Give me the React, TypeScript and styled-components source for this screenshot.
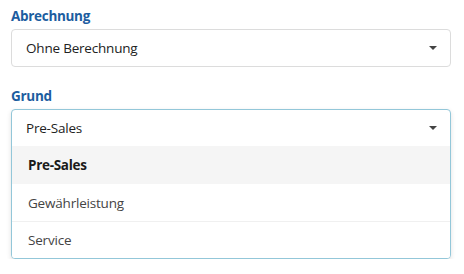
import React, { useState } from "react";
import styled, { createGlobalStyle } from "styled-components";

const GlobalStyle = createGlobalStyle`
    html, body {
        margin: 0;
        padding: 0;
        background: #ffffff;
    }
    body {
        font-family: "Open Sans", "Noto Sans", sans-serif;
        font-size: 13.5px;
        color: #333333;
    }
`

const Form = styled.div`
    width: 440px;
    padding: 7px 13px 0 11px;
    display: flex;
    flex-direction: column;
    gap: 20px;
`

const Field = styled.div`
    display: flex;
    flex-direction: column;
    gap: 3px;
`

const Label = styled.label`
    font-size: 13.5px;
    font-weight: 700;
    line-height: 19px;
    letter-spacing: -0.3px;
    color: #1c5d9f;
`

const SelectBox = styled.div<{ open?: boolean }>`
    border: 1px solid ${p => p.open ? "#93c7d9" : "#dcdcdc"};
    border-radius: 4px;
    background: #ffffff;
    box-shadow: ${p => p.open ? "0 2px 5px rgba(0, 0, 0, 0.12)" : "none"};
    overflow: hidden;
`

const SelectRow = styled.div`
    height: 36px;
    display: flex;
    align-items: center;
    justify-content: space-between;
    padding: 0 13px 0 14px;
    cursor: pointer;
`

const SelectValue = styled.span`
    font-size: 13.5px;
    letter-spacing: -0.2px;
    color: #222222;
`

const Caret = styled.span`
    width: 0;
    height: 0;
    border-left: 4px solid transparent;
    border-right: 4px solid transparent;
    border-top: 4px solid #444444;
`

const OptionList = styled.ul`
    list-style: none;
    margin: 0;
    padding: 0;
`

const Option = styled.li<{ selected?: boolean }>`
    height: 37px;
    display: flex;
    align-items: center;
    padding: 0 16px;
    font-size: 13.5px;
    letter-spacing: ${p => p.selected ? "-0.3px" : "-0.2px"};
    font-weight: ${p => p.selected ? 700 : 400};
    color: ${p => p.selected ? "#1a1a1a" : "#444444"};
    background: ${p => p.selected ? "#f5f5f5" : "#ffffff"};
    border-bottom: 1px solid ${p => p.selected ? "#f5f5f5" : "#f0f0f0"};
    &:last-child {
        height: 36px;
        border-bottom: none;
    }
`

const reasons = ["Pre-Sales", "Gewährleistung", "Service"];

export const App = () => {
    const [reason, setReason] = useState<string>("Pre-Sales");

    return (
        <>
            <GlobalStyle />
            <Form>
                <Field>
                    <Label>Abrechnung</Label>
                    <SelectBox>
                        <SelectRow>
                            <SelectValue>Ohne Berechnung</SelectValue>
                            <Caret />
                        </SelectRow>
                    </SelectBox>
                </Field>
                <Field>
                    <Label>Grund</Label>
                    <SelectBox open>
                        <SelectRow>
                            <SelectValue>{reason}</SelectValue>
                            <Caret />
                        </SelectRow>
                        <OptionList>
                            {reasons.map(item => (
                                <Option
                                    key={item}
                                    selected={item === reason}
                                    onClick={() => setReason(item)}
                                >
                                    {item}
                                </Option>
                            ))}
                        </OptionList>
                    </SelectBox>
                </Field>
            </Form>
        </>
    )
}

export default App;
